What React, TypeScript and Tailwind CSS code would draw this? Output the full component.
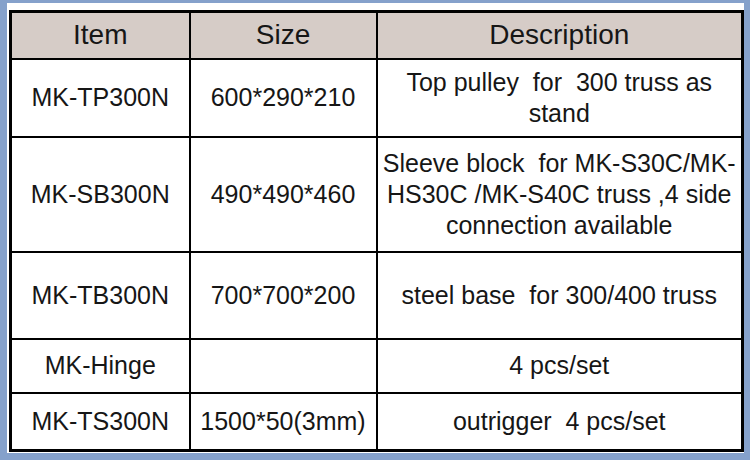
import React from 'react'

const rows = [
  { item: 'MK-TP300N', size: '600*290*210', desc: ['Top pulley  for  300 truss as', 'stand'], h: 'h-[78px]' },
  {
    item: 'MK-SB300N',
    size: '490*490*460',
    desc: ['Sleeve block  for MK-S30C/MK-', 'HS30C /MK-S40C truss ,4 side', 'connection available'],
    h: 'h-[115px]',
  },
  { item: 'MK-TB300N', size: '700*700*200', desc: ['steel base  for 300/400 truss'], h: 'h-[87px]' },
  { item: 'MK-Hinge', size: '', desc: ['4 pcs/set'], h: 'h-[54px]' },
  { item: 'MK-TS300N', size: '1500*50(3mm)', desc: ['outrigger  4 pcs/set'], h: 'h-[58px]' },
]

const App = () => {
  return (
    <div className="w-[750px] h-[460px] bg-white border-l-[7px] border-t-[3px] border-r-[6px] border-b-[7px] border-[#85a1cb] pl-[2px] pt-[7px] pr-[1px] font-['Liberation_Sans',Arial,sans-serif] text-[#161616]">
      <table className="w-[735px] table-fixed border-collapse border-[3px] border-black">
        <colgroup>
          <col className="w-[179px]" />
          <col className="w-[187px]" />
          <col />
        </colgroup>
        <thead>
          <tr className="h-[47px] bg-[#d6ccc7] text-[28px] leading-none">
            <th className="border-2 border-black font-normal">Item</th>
            <th className="border-2 border-black font-normal">Size</th>
            <th className="border-2 border-black font-normal">Description</th>
          </tr>
        </thead>
        <tbody className="text-[25px] leading-[31px]">
          {rows.map((r) => (
            <tr key={r.item} className={r.h}>
              <td className="border-2 border-black text-center align-middle">{r.item}</td>
              <td className="border-2 border-black text-center align-middle">{r.size}</td>
              <td className="border-2 border-black text-center align-middle whitespace-pre">
                {r.desc.map((line, i) => (
                  <div key={i}>{line}</div>
                ))}
              </td>
            </tr>
          ))}
        </tbody>
      </table>
    </div>
  )
}

export default App
